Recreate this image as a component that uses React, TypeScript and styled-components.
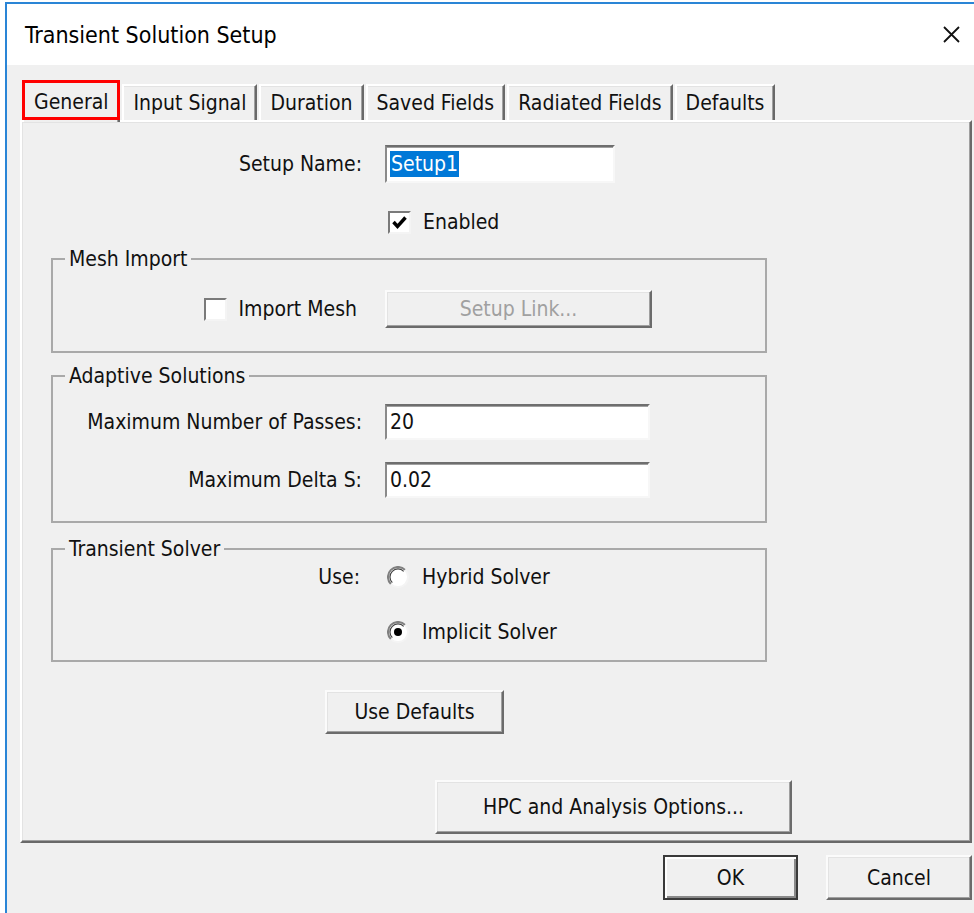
import React from "react";
import styled, { createGlobalStyle } from "styled-components";

const GlobalStyle = createGlobalStyle`
  html, body {
    margin: 0;
    padding: 0;
    overflow: hidden;
    background: #fff;
  }
  body {
    font-family: "DejaVu Sans Condensed", "Liberation Sans", Arial, sans-serif;
    font-size: 21px;
    color: #111;
  }
`;

const Window = styled.div`
  margin: 2px 0 0 5px;
  width: 980px;
  height: 930px;
  box-sizing: border-box;
  border-top: 2px solid #2a85d6;
  border-left: 2px solid #2a85d6;
  background: #f0f0f0;
  display: flex;
  flex-direction: column;
`;

const TitleBar = styled.div`
  height: 61px;
  background: #fff;
  display: flex;
  align-items: center;
  padding-left: 18px;
`;

const Title = styled.span`
  font-size: 23px;
  color: #000;
`;

const CloseButton = styled.div`
  margin-left: auto;
  width: 68px;
  height: 100%;
  display: flex;
  align-items: center;
  justify-content: center;
`;

const Body = styled.div`
  padding: 15px 13px 0 13px;
`;

const TabStrip = styled.div`
  height: 40px;
  display: flex;
  align-items: flex-end;
  gap: 2px;
  padding-left: 2px;
`;

const Tab = styled.div<{ $active?: boolean }>`
  position: relative;
  z-index: ${(p) => (p.$active ? 1 : 0)};
  height: ${(p) => (p.$active ? 42 : 36)}px;
  margin-bottom: ${(p) => (p.$active ? -2 : 0)}px;
  box-sizing: border-box;
  padding: 0 ${(p) => (p.$active ? 10 : 9)}px;
  display: flex;
  align-items: center;
  white-space: nowrap;
  background: #f0f0f0;
  border-top: 2px solid #fff;
  border-left: 2px solid #fff;
  border-right: 2px solid #696969;
  box-shadow: inset -1px 0 #a0a0a0, inset 0 1px #e3e3e3;

  &::after {
    content: ${(p) => (p.$active ? '""' : "none")};
    position: absolute;
    top: -2px;
    left: -2px;
    right: -2px;
    bottom: 2px;
    border: 3px solid #f00;
  }
`;

const Panel = styled.div`
  height: 723px;
  box-sizing: border-box;
  border: 2px solid;
  border-color: #fff #696969 #696969 #fff;
  box-shadow: inset -1px -1px #a0a0a0, inset 1px 1px #e3e3e3;
  padding: 23px 0 0 29px;
  display: flex;
  flex-direction: column;
  align-items: flex-start;
`;

const FormRow = styled.div<{ $label: number; $height?: number; $top?: number }>`
  display: grid;
  grid-template-columns: ${(p) => p.$label}px auto;
  column-gap: 23px;
  align-items: center;
  min-height: ${(p) => p.$height ?? 38}px;
  margin-top: ${(p) => p.$top ?? 0}px;
`;

const RowLabel = styled.span<{ $inset?: number }>`
  justify-self: end;
  white-space: nowrap;
  margin-right: ${(p) => p.$inset ?? 0}px;
  display: flex;
  align-items: center;
`;

const TextBox = styled.div<{ $width: number; $height?: number }>`
  width: ${(p) => p.$width}px;
  height: ${(p) => p.$height ?? 38}px;
  box-sizing: border-box;
  background: #fff;
  border: 2px solid;
  border-color: #6e6e6e #f7f7f7 #f7f7f7 #8a8a8a;
  box-shadow: inset 0 1px #a0a0a0;
  padding-left: 3px;
  display: flex;
  align-items: center;
  white-space: nowrap;
`;

const Selection = styled.span`
  background: #0078d7;
  color: #fff;
  line-height: 26px;
  padding: 0 1px;
`;

const Check = styled.label<{ $gap?: number; $shift?: number }>`
  display: flex;
  align-items: center;
  gap: ${(p) => p.$gap ?? 12}px;
  margin-left: ${(p) => p.$shift ?? 0}px;
  white-space: nowrap;
`;

const Box = styled.span`
  width: 23px;
  height: 23px;
  box-sizing: border-box;
  background: #fff;
  border: 2px solid;
  border-color: #7a7a7a #f4f4f4 #f4f4f4 #7a7a7a;
  display: inline-flex;
  align-items: center;
  justify-content: center;
`;

const GroupBox = styled.fieldset<{ $top: number }>`
  margin: ${(p) => p.$top}px 0 0 0;
  padding: 0;
  width: 716px;
  box-sizing: border-box;
  border: 2px solid #a9a9a9;
  min-width: 0;
`;

const Legend = styled.legend`
  margin-left: 12px;
  padding: 0 4px;
  line-height: 24px;
`;

const GroupBody = styled.div<{ $pt: number; $pb: number; $gap: number }>`
  padding: ${(p) => p.$pt}px 0 ${(p) => p.$pb}px 0;
  display: flex;
  flex-direction: column;
  gap: ${(p) => p.$gap}px;
`;

const Button = styled.button<{
  $width: number;
  $height: number;
  $default?: boolean;
  $shift?: number;
  $top?: number;
}>`
  width: ${(p) => p.$width}px;
  height: ${(p) => p.$height}px;
  margin: ${(p) => p.$top ?? 0}px 0 0 ${(p) => p.$shift ?? 0}px;
  box-sizing: border-box;
  font: inherit;
  color: #111;
  background: #f0f0f0;
  padding: 0;
  border: 2px solid;
  border-color: ${(p) =>
    p.$default ? "#3a3a3a" : "#fbfbfb #6b6b6b #6b6b6b #fbfbfb"};
  box-shadow: ${(p) =>
    p.$default
      ? "inset 2px 2px #fff, inset -2px -2px #8a8a8a"
      : "inset -1px -1px #a0a0a0, inset 1px 1px #e3e3e3"};

  &:disabled {
    color: #a0a0a0;
  }
`;

const Footer = styled.div`
  display: flex;
  justify-content: flex-end;
  gap: 28px;
  margin-top: 12px;
`;

const CloseIcon = () => (
  <svg width="17" height="17" viewBox="0 0 17 17">
    <path d="M1 1 L16 16 M16 1 L1 16" stroke="#111" strokeWidth="1.8" fill="none" />
  </svg>
);

const CheckMark = () => (
  <svg width="17" height="17" viewBox="0 0 17 17">
    <path d="M2.5 8 L6.5 12.5 L14.5 3.5" stroke="#000" strokeWidth="3.4" fill="none" />
  </svg>
);

const Radio = ({ on }: { on?: boolean }) => (
  <svg width="22" height="22" viewBox="0 0 22 22">
    <circle cx="11" cy="11" r="10" fill="#fff" />
    <path d="M3.9 18.1 A10 10 0 0 1 18.1 3.9" stroke="#808080" strokeWidth="2" fill="none" />
    <path d="M5.3 16.7 A8 8 0 0 1 16.7 5.3" stroke="#404040" strokeWidth="1.2" fill="none" />
    <path d="M18.1 3.9 A10 10 0 0 1 3.9 18.1" stroke="#f4f4f4" strokeWidth="2" fill="none" />
    {on && <circle cx="11" cy="11" r="4" fill="#000" />}
  </svg>
);

const tabs = [
  "General",
  "Input Signal",
  "Duration",
  "Saved Fields",
  "Radiated Fields",
  "Defaults",
];

const App = () => {
  return (
    <>
      <GlobalStyle />
      <Window>
        <TitleBar>
          <Title>Transient Solution Setup</Title>
          <CloseButton>
            <CloseIcon />
          </CloseButton>
        </TitleBar>

        <Body>
          <TabStrip>
            {tabs.map((t, i) => (
              <Tab key={t} $active={i === 0}>
                {t}
              </Tab>
            ))}
          </TabStrip>

          <Panel>
            <FormRow $label={311}>
              <RowLabel>Setup Name:</RowLabel>
              <TextBox $width={230}>
                <Selection>Setup1</Selection>
              </TextBox>
            </FormRow>

            <FormRow $label={311} $top={20}>
              <span />
              <Check $shift={3}>
                <Box>
                  <CheckMark />
                </Box>
                Enabled
              </Check>
            </FormRow>

            <GroupBox $top={6}>
              <Legend>Mesh Import</Legend>
              <GroupBody $pt={19} $pb={23} $gap={0}>
                <FormRow $label={309}>
                  <RowLabel $inset={5}>
                    <Check>
                      <Box />
                      Import Mesh
                    </Check>
                  </RowLabel>
                  <Button $width={267} $height={38} disabled>
                    Setup Link...
                  </Button>
                </FormRow>
              </GroupBody>
            </GroupBox>

            <GroupBox $top={11}>
              <Legend>Adaptive Solutions</Legend>
              <GroupBody $pt={16} $pb={23} $gap={22}>
                <FormRow $label={309} $height={36}>
                  <RowLabel>Maximum Number of Passes:</RowLabel>
                  <TextBox $width={265} $height={36}>20</TextBox>
                </FormRow>
                <FormRow $label={309} $height={36}>
                  <RowLabel>Maximum Delta S:</RowLabel>
                  <TextBox $width={265} $height={36}>0.02</TextBox>
                </FormRow>
              </GroupBody>
            </GroupBox>

            <GroupBox $top={14}>
              <Legend>Transient Solver</Legend>
              <GroupBody $pt={2} $pb={14} $gap={27}>
                <FormRow $label={309} $height={28}>
                  <RowLabel $inset={2}>Use:</RowLabel>
                  <Check $shift={2} $gap={13}>
                    <Radio />
                    Hybrid Solver
                  </Check>
                </FormRow>
                <FormRow $label={309} $height={28}>
                  <span />
                  <Check $shift={2} $gap={13}>
                    <Radio on />
                    Implicit Solver
                  </Check>
                </FormRow>
              </GroupBody>
            </GroupBox>

            <Button $width={179} $height={44} $shift={274} $top={28}>
              Use Defaults
            </Button>

            <Button $width={357} $height={54} $shift={384} $top={46}>
              HPC and Analysis Options...
            </Button>
          </Panel>

          <Footer>
            <Button $width={135} $height={45} $default>
              OK
            </Button>
            <Button $width={146} $height={45}>
              Cancel
            </Button>
          </Footer>
        </Body>
      </Window>
    </>
  );
};

export default App;
